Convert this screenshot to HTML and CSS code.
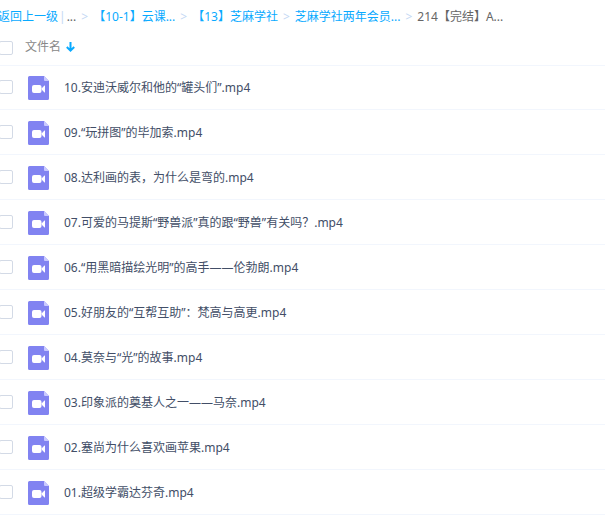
FILE: index.html
```
<!DOCTYPE html>
<html lang="zh-CN">

<head>
  <meta charset="UTF-8">
  <meta name="viewport" content="width=device-width, initial-scale=1.0">
  <title>214【完结】A...</title>
  <link rel="stylesheet" href="styles.css">
</head>

<body>
  <svg class="sprite" aria-hidden="true">
    <symbol id="icon-video" viewBox="0 0 21 24">
      <path fill="#8183f1" d="M1.500 0H16l5 5v17.500a1.500 1.500 0 0 1-1.500 1.500h-18A1.500 1.500 0 0 1 0 22.500v-21A1.500 1.500 0 0 1 1.500 0z" />
      <path fill="#c9caff" d="M16 0l5 5h-4a1 1 0 0 1-1-1z" />
      <rect fill="#fff" x="4" y="9" width="9.500" height="8" rx="2" />
      <path fill="#fff" d="M13.800 12.300L16.500 9.500h.5v7h-.5L13.800 13.700z" />
    </symbol>
  </svg>

  <nav class="breadcrumb">
    <a href="#">返回上一级</a>
    <span class="divider">|</span>
    <span class="more">...</span>
    <span class="arrow">&gt;</span>
    <a href="#">【10-1】云课...</a>
    <span class="arrow">&gt;</span>
    <a href="#">【13】芝麻学社</a>
    <span class="arrow">&gt;</span>
    <a href="#">芝麻学社两年会员...</a>
    <span class="arrow">&gt;</span>
    <span class="current">214【完结】A...</span>
  </nav>

  <div class="list-header">
    <input type="checkbox" class="check" aria-label="全选">
    <button type="button" class="sort">文件名
      <svg class="sort-icon" viewBox="0 0 9 10" aria-hidden="true">
        <path fill="none" stroke="#09aaff" stroke-width="2" d="M4.500 0v8.500M.8 5l3.700 3.600L8.200 5" />
      </svg>
    </button>
  </div>

  <ul class="file-list">
    <li class="file">
      <input type="checkbox" class="check" id="file-10">
      <svg class="file-icon" aria-hidden="true"><use href="#icon-video" /></svg>
      <label for="file-10">10.安迪沃威尔和他的“罐头们”.mp4</label>
    </li>
    <li class="file">
      <input type="checkbox" class="check" id="file-09">
      <svg class="file-icon" aria-hidden="true"><use href="#icon-video" /></svg>
      <label for="file-09">09.“玩拼图”的毕加索.mp4</label>
    </li>
    <li class="file">
      <input type="checkbox" class="check" id="file-08">
      <svg class="file-icon" aria-hidden="true"><use href="#icon-video" /></svg>
      <label for="file-08">08.达利画的表，为什么是弯的.mp4</label>
    </li>
    <li class="file">
      <input type="checkbox" class="check" id="file-07">
      <svg class="file-icon" aria-hidden="true"><use href="#icon-video" /></svg>
      <label for="file-07">07.可爱的马提斯“野兽派”真的跟“野兽”有关吗？.mp4</label>
    </li>
    <li class="file">
      <input type="checkbox" class="check" id="file-06">
      <svg class="file-icon" aria-hidden="true"><use href="#icon-video" /></svg>
      <label for="file-06">06.“用黑暗描绘光明”的高手——伦勃朗.mp4</label>
    </li>
    <li class="file">
      <input type="checkbox" class="check" id="file-05">
      <svg class="file-icon" aria-hidden="true"><use href="#icon-video" /></svg>
      <label for="file-05">05.好朋友的“互帮互助”：梵高与高更.mp4</label>
    </li>
    <li class="file">
      <input type="checkbox" class="check" id="file-04">
      <svg class="file-icon" aria-hidden="true"><use href="#icon-video" /></svg>
      <label for="file-04">04.莫奈与“光”的故事.mp4</label>
    </li>
    <li class="file">
      <input type="checkbox" class="check" id="file-03">
      <svg class="file-icon" aria-hidden="true"><use href="#icon-video" /></svg>
      <label for="file-03">03.印象派的奠基人之一——马奈.mp4</label>
    </li>
    <li class="file">
      <input type="checkbox" class="check" id="file-02">
      <svg class="file-icon" aria-hidden="true"><use href="#icon-video" /></svg>
      <label for="file-02">02.塞尚为什么喜欢画苹果.mp4</label>
    </li>
    <li class="file">
      <input type="checkbox" class="check" id="file-01">
      <svg class="file-icon" aria-hidden="true"><use href="#icon-video" /></svg>
      <label for="file-01">01.超级学霸达芬奇.mp4</label>
    </li>
  </ul>
</body>

</html>
```
FILE: styles.css
```
body {
  margin: 0;
  overflow-x: hidden;
  background-color: #fff;
  color: #424e67;
  font-family: "Noto Sans", "Noto Sans CJK SC", sans-serif;
  font-size: 12px;
  line-height: 18px;
}

.sprite {
  display: none;
}

.breadcrumb {
  display: flex;
  gap: 5px;
  margin-left: -2px;
  padding: 8px 0 4px;
  color: #666;
  white-space: nowrap;
}

.breadcrumb a {
  color: #09aaff;
  text-decoration: none;
}

.breadcrumb a:hover {
  text-decoration: underline;
}

.breadcrumb .divider,
.breadcrumb .arrow {
  color: #c4d8f4;
}

.breadcrumb .divider {
  margin: 0 -4px;
}

.list-header {
  display: flex;
  align-items: center;
  gap: 12px;
  height: 35px;
  box-shadow: 0 1px #f2f6fd;
}

.check {
  appearance: none;
  box-sizing: border-box;
  flex: none;
  width: 14px;
  height: 14px;
  margin: 0 0 0 -1px;
  border: 1px solid #d3dae6;
  border-radius: 2px;
  background-color: #fff;
}

.check:checked {
  border-color: #09aaff;
  background-color: #09aaff;
}

.sort {
  display: flex;
  align-items: center;
  gap: 5px;
  padding: 0 0 2px;
  border: 0;
  background: none;
  color: #888;
  font: inherit;
  cursor: pointer;
}

.sort-icon {
  width: 9px;
  height: 10px;
}

.file-list {
  margin: 0;
  padding: 0;
  list-style: none;
}

.file {
  display: flex;
  align-items: center;
  gap: 15px;
  height: 44px;
  border-bottom: 1px solid #f2f6fd;
}

.file-icon {
  flex: none;
  width: 21px;
  height: 24px;
  padding-top: 2px;
}

.file label {
  padding-top: 2px;
}
```
